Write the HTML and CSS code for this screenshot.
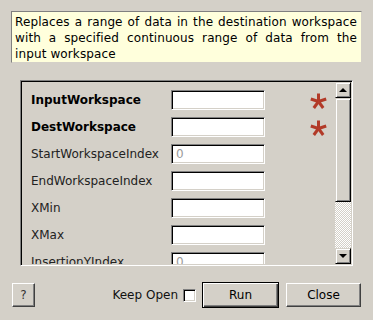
FILE: index.html
```html
<!DOCTYPE html>
<html>
<head>
<meta charset="utf-8">
<link rel="stylesheet" href="styles.css">
</head>
<body>
<div class="dialog">
  <div class="desc">Replaces a range of data in the destination workspace with a specified continuous range of data from the input workspace</div>
  <div class="frame">
    <div class="viewport">
      <div class="rows">
        <div class="row"><span class="label bold">InputWorkspace</span><span class="field"></span><span class="req"><svg width="17" height="16" viewBox="0 0 17 16"><g stroke="#b23a28" stroke-width="3" stroke-linecap="butt"><line x1="8.5" y1="8.5" x2="8.5" y2="0.5"/><line x1="8.5" y1="8.5" x2="0.8" y2="6"/><line x1="8.5" y1="8.5" x2="16.2" y2="6"/><line x1="8.5" y1="8.5" x2="3.8" y2="15"/><line x1="8.5" y1="8.5" x2="13.2" y2="15"/></g></svg></span></div>
        <div class="row"><span class="label bold">DestWorkspace</span><span class="field"></span><span class="req"><svg width="17" height="16" viewBox="0 0 17 16"><g stroke="#b23a28" stroke-width="3" stroke-linecap="butt"><line x1="8.5" y1="8.5" x2="8.5" y2="0.5"/><line x1="8.5" y1="8.5" x2="0.8" y2="6"/><line x1="8.5" y1="8.5" x2="16.2" y2="6"/><line x1="8.5" y1="8.5" x2="3.8" y2="15"/><line x1="8.5" y1="8.5" x2="13.2" y2="15"/></g></svg></span></div>
        <div class="row"><span class="label">StartWorkspaceIndex</span><span class="field"><span class="ph">0</span></span><span class="req"></span></div>
        <div class="row"><span class="label">EndWorkspaceIndex</span><span class="field"></span><span class="req"></span></div>
        <div class="row"><span class="label">XMin</span><span class="field"></span><span class="req"></span></div>
        <div class="row"><span class="label">XMax</span><span class="field"></span><span class="req"></span></div>
        <div class="row"><span class="label">InsertionYIndex</span><span class="field"><span class="ph">0</span></span><span class="req"></span></div>
      </div>
    </div>
    <div class="scrollbar">
      <div class="sbtn"><span class="arrow up"></span></div>
      <div class="track">
        <div class="thumb"></div>
      </div>
      <div class="sbtn"><span class="arrow down"></span></div>
    </div>
  </div>
  <div class="buttons">
    <button class="btn help">?</button>
    <div class="spacer"></div>
    <label class="keep">Keep Open <span class="check"></span></label>
    <button class="btn run">Run</button>
    <button class="btn close">Close</button>
  </div>
</div>
</body>
</html>
```

FILE: styles.css
```css
html, body {
  margin: 0;
  padding: 0;
  background: #d4d0c8;
}
body {
  font-family: "DejaVu Sans", sans-serif;
  font-size: 12px;
  color: #000;
}
.dialog {
  width: 373px;
  height: 320px;
  display: flex;
  flex-direction: column;
  overflow: hidden;
}
.desc {
  margin: 11px 11px 0 11px;
  height: 52px;
  box-sizing: border-box;
  background: #ffffdc;
  border: 1px solid;
  border-color: #808080 #d4d0c8 #d4d0c8 #808080;
  padding: 2px 4px 0 3px;
  text-align: justify;
  line-height: 16px;
  font-size: 12px;
  letter-spacing: 0.12px;
}
.frame {
  margin: 17px 0 0 20px;
  width: 333px;
  height: 186px;
  box-sizing: border-box;
  border: 1px solid;
  border-color: #808080 #fff #fff #808080;
  box-shadow: inset 1px 1px #000, inset -1px -1px #d4d0c8;
  padding: 1px;
  display: flex;
}
.viewport {
  flex: 1;
  overflow: hidden;
}
.rows {
  padding: 8px 0 0 9px;
  display: flex;
  flex-direction: column;
  gap: 7px;
}
.row {
  display: flex;
  align-items: center;
  height: 20px;
}
.label {
  width: 140px;
  white-space: nowrap;
  color: #222;
}
.label.bold {
  font-weight: bold;
  color: #000;
}
.field {
  width: 94px;
  height: 20px;
  box-sizing: border-box;
  background: #fff;
  border: 1px solid;
  border-color: #808080 #fff #fff #808080;
  box-shadow: inset 1px 1px #000, inset -1px -1px #d4d0c8;
  display: flex;
  align-items: center;
  padding-left: 4px;
}
.ph {
  color: #9a9a9a;
}
.req {
  margin-left: 45px;
  width: 17px;
  height: 16px;
  display: flex;
  margin-top: 2px;
}
.scrollbar {
  width: 16px;
  display: flex;
  flex-direction: column;
}
.sbtn, .thumb {
  box-sizing: border-box;
  background: #d4d0c8;
  border: 1px solid;
  border-color: #d4d0c8 #000 #000 #d4d0c8;
  box-shadow: inset 1px 1px #fff, inset -1px -1px #808080;
}
.sbtn {
  height: 16px;
  display: flex;
  align-items: center;
  justify-content: center;
}
.arrow {
  width: 0;
  height: 0;
  border-left: 4px solid transparent;
  border-right: 4px solid transparent;
}
.arrow.up {
  border-bottom: 4px solid #000;
}
.arrow.down {
  border-top: 4px solid #000;
}
.track {
  flex: 1;
  background: repeating-conic-gradient(#fff 0 25%, #d4d0c8 0 50%) 0 0 / 2px 2px;
  display: flex;
  flex-direction: column;
}
.thumb {
  height: 104px;
}
.buttons {
  margin-top: 16px;
  padding: 0 12px;
  display: flex;
  align-items: center;
  height: 26px;
}
.spacer {
  flex: 1;
}
.btn {
  font-family: "DejaVu Sans", sans-serif;
  font-size: 12px;
  color: #000;
  background: #d4d0c8;
  box-sizing: border-box;
  border: 1px solid;
  border-color: #fff #404040 #404040 #fff;
  box-shadow: inset -1px -1px #808080, inset 1px 1px #d4d0c8;
  padding: 0;
  height: 24px;
  margin: 0;
}
.help {
  width: 23px;
  color: #333;
}
.keep {
  display: flex;
  align-items: center;
  gap: 5px;
  color: #111;
}
.check {
  width: 13px;
  height: 13px;
  box-sizing: border-box;
  background: #fff;
  border: 1px solid;
  border-color: #808080 #fff #fff #808080;
  box-shadow: inset 1px 1px #000, inset -1px -1px #d4d0c8;
}
.run {
  margin-left: 6px;
  width: 77px;
  height: 26px;
  border: 1px solid #000;
  box-shadow: inset 1px 1px #fff, inset -1px -1px #404040, inset -2px -2px #808080;
}
.close {
  margin-left: 7px;
  width: 75px;
}
```
